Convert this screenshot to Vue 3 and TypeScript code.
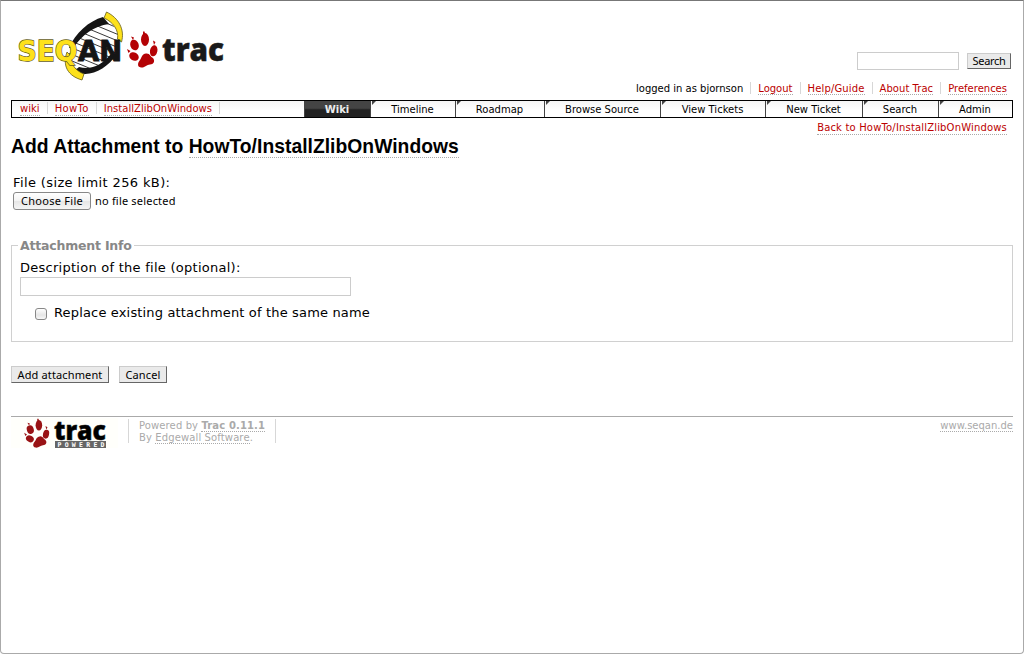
<script setup lang="ts">
interface Tab { label: string; width: number; active?: boolean }
const tabs: Tab[] = [
  { label: 'Wiki', width: 66, active: true },
  { label: 'Timeline', width: 85 },
  { label: 'Roadmap', width: 89 },
  { label: 'Browse Source', width: 116 },
  { label: 'View Tickets', width: 105 },
  { label: 'New Ticket', width: 97 },
  { label: 'Search', width: 76 },
  { label: 'Admin', width: 74 },
]
const crumbs = ['wiki', 'HowTo', 'InstallZlibOnWindows']
const links = ['Logout', 'Help/Guide', 'About Trac', 'Preferences']
const rungs = [0, 1, 2, 3, 4, 5, 6, 7, 8, 9, 10, 11, 12]
</script>

<template>
  <div class="window">
    <header class="banner">
      <svg class="logo" width="220" height="80" viewBox="10 6 220 80">
        <defs>
          <clipPath id="helix"><path d="M105 20C91 24 78 34 72 47C67 55 66 67 78 73C96 72 111 61 116 50C121 39 120 27 105 20Z" /></clipPath>
          <g id="paw">
            <ellipse cx="145" cy="39.500" rx="4" ry="6.500" />
            <ellipse cx="134.500" cy="45" rx="4.200" ry="5.400" transform="rotate(-18 134.500 45)" />
            <ellipse cx="153.700" cy="50.800" rx="3.700" ry="5.600" transform="rotate(12 153.700 50.800)" />
            <ellipse cx="134" cy="56.500" rx="5" ry="4" transform="rotate(30 134 56.500)" />
            <path d="M146 53.500C150 53 150.500 57 153 58C155.500 61 153.500 64.500 150 64.500C146.500 64.500 145 68 141 67.500C136.500 67 138 62 140 60C142 57 142 54 146 53.500Z" />
            <path d="M143 31.500L144.500 31.500L145.500 35L143 34.500ZM131 36.500L134 37.500L133 40ZM153 40.500L155.500 42L154 45ZM127 49L130.500 51L128.500 53Z" />
          </g>
        </defs>
        <path d="M105 20C91 24 78 34 72 47C67 55 66 67 78 73C96 72 111 61 116 50C121 39 120 27 105 20Z" fill="#fff" />
        <g clip-path="url(#helix)" stroke="#222" stroke-width=".9">
          <line v-for="i in rungs" :key="i" x1="60" :y1="i * 6.500 - 9" x2="130" :y2="i * 6.500 + 20" />
        </g>
        <path d="M103 17C89 21 75 33 69 48L74 47C82 35 94 26 109 24Z" fill="#151515" />
        <path d="M74 71C88 79 106 70 117 54L111 54C101 66 91 70 79 67Z" fill="#151515" />
        <path d="M106.500 12C119 18 125 30 121.500 42L117.500 39C119 30 113 22 104 18Z" fill="#fde11b" stroke="#655c19" stroke-width=".8" />
        <path d="M72 57C70 64 76 71 84 74L82 80C68 76 62 66 67 52Z" fill="#fde11b" stroke="#655c19" stroke-width=".8" />
        <text x="17.500" y="61" class="seq" textLength="60" lengthAdjust="spacingAndGlyphs">SEQ</text>
        <text x="78" y="61" class="an" textLength="44" lengthAdjust="spacingAndGlyphs">AN</text>
        <use href="#paw" fill="#b40205" />
        <text x="162" y="61" class="trac" textLength="62" lengthAdjust="spacingAndGlyphs">trac</text>
      </svg>
      <div class="tools">
        <form class="search" @submit.prevent>
          <input type="text" aria-label="Search" /><button class="btn find">Search</button>
        </form>
        <ul class="meta">
          <li>logged in as bjornson</li>
          <li v-for="l in links" :key="l"><a>{{ l }}</a></li>
        </ul>
      </div>
    </header>

    <nav class="mainnav">
      <div class="crumbs"><span v-for="c in crumbs" :key="c" :class="{ project: c === 'HowTo' }"><a>{{ c }}</a></span></div>
      <div v-for="t in tabs" :key="t.label" class="tab" :class="{ active: t.active }" :style="{ width: t.width + 'px' }"><span>{{ t.label }}</span></div>
    </nav>
    <div class="back"><a>Back to HowTo/InstallZlibOnWindows</a></div>

    <main>
      <h1>Add Attachment to <a>HowTo/InstallZlibOnWindows</a></h1>
      <div class="file">
        <label class="flabel">File (size limit 256 kB):</label>
        <div class="pick"><button class="choose">Choose File</button><span>no file selected</span></div>
      </div>
      <section class="info">
        <h2>Attachment Info</h2>
        <label class="desc">Description of the file (optional):</label>
        <input type="text" aria-label="Description" />
        <label class="replace"><i class="check"></i><span>Replace existing attachment of the same name</span></label>
      </section>
      <div class="buttons"><button class="btn add">Add attachment</button><button class="btn cancel">Cancel</button></div>
    </main>

    <footer>
      <svg class="powered" width="107" height="32" viewBox="11 417 107 32">
        <rect x="11" y="418" width="107" height="30" fill="#fffffb" />
        <use href="#paw" fill="#991315" transform="translate(-80 393.600) scale(.82 .8)" />
        <text x="54" y="440" class="ptrac" textLength="52" lengthAdjust="spacingAndGlyphs">trac</text>
        <rect x="55" y="441" width="51" height="7" fill="#666" />
        <text x="57.500" y="447" class="pw" textLength="47">POWERED</text>
      </svg>
      <p class="by">Powered by <a><b>Trac 0.11.1</b></a><br />By <a>Edgewall Software</a>.</p>
      <p class="site"><a>www.seqan.de</a></p>
    </footer>
  </div>
</template>

<style>
html, body { margin: 0; background: #fff; }
</style>
<style scoped>
* { box-sizing: border-box; }
.window { width: 1024px; height: 654px; padding: 0 10px; border: 1px solid #aaa; border-top-color: #777; border-radius: 0 0 4px 4px; overflow: hidden; font: 10px/13px "DejaVu Sans", sans-serif; color: #000; }
.banner { display: flex; justify-content: space-between; height: 99px; }
svg { overflow: visible; flex: none; }
.logo { margin: 5px 0 0 -1px; }
text { font-family: "DejaVu Sans", sans-serif; font-weight: bold; }
.seq { font-size: 29px; fill: #fde11b; stroke: #655c19; stroke-width: 1.400px; paint-order: stroke; }
.an { font-size: 29px; fill: #151515; stroke: #151515; stroke-width: 1px; }
.trac, .ptrac { font-family: "Open Sans", sans-serif; font-weight: 800; fill: #1a1a1a; stroke: #1a1a1a; stroke-width: .5px; }
.trac { font-size: 32px; }
.ptrac { font-size: 27px; fill: #000; }
.pw { font-family: "DejaVu Sans Mono", monospace; font-size: 6.500px; fill: #fff; font-weight: bold; }
a { color: #b00; border-bottom: 1px dotted #aaa; }
.tools { padding-top: 51px; }
.search { display: flex; justify-content: flex-end; gap: 8px; padding-right: 2px; }
input { border: 1px solid #ccc; background: #fff; padding: 0; margin: 0; }
.search input { width: 102px; height: 18px; }
.btn { font: 11px/14px "Noto Sans", sans-serif; color: #000; background: #eaeaea; border: 1px solid #ccc; border-right-color: #666; border-bottom-color: #666; padding: 0; margin: 0; height: 17px; white-space: nowrap; text-align: center; }
.find { width: 44px; height: 16px; margin-top: 1px; font-size: 11px; letter-spacing: -.3px; }
.meta { display: flex; justify-content: flex-end; list-style: none; margin: 12px 0 0; padding: 0; line-height: 13px; white-space: nowrap; }
.meta li { padding: 0 7px; border-right: 1px solid #d7d7d7; height: 12px; }
.meta li:nth-child(3) { letter-spacing: .15px; }
.meta li:nth-child(4) { letter-spacing: .05px; }
.meta li:last-child { border: 0; padding-right: 6px; }
.meta a { display: inline-block; height: 13px; line-height: 13px; }
.mainnav { display: flex; width: 1002px; height: 18px; border: 1px solid #000; background: linear-gradient(#f5f5f5, #fff 60%); }
.crumbs { flex: 1; display: flex; line-height: 14px; padding-left: 1px; }
.crumbs span { padding: 0 7px; height: 12px; margin-top: 1px; border-right: 1px solid #d7d7d7; letter-spacing: .03px; }
.crumbs .project { letter-spacing: .35px; }
.crumbs a { display: inline-block; height: 13px; line-height: 12px; }
.tab { position: relative; border-left: 1px solid #444; padding-right: 1px; text-align: center; line-height: 17px; flex: none; white-space: nowrap; }
.tab::before { content: ""; position: absolute; left: 1px; top: 0; border-top: 4px solid #444; border-right: 4px solid transparent; }
.active { background: linear-gradient(#444 45%, #222 55%); color: #eee; font-weight: bold; }
.active::before { display: none; }
.back { text-align: right; padding-right: 6px; height: 17px; padding-top: 3px; letter-spacing: .17px; }
.back a { display: inline-block; height: 14px; line-height: 13px; }
h1 { font: bold 19.300px/24px "Liberation Sans", sans-serif; letter-spacing: .03px; margin: 0; height: 24px; white-space: nowrap; }
h1 a { color: #000; display: inline-block; height: 23px; }
.file { margin-top: 16px; padding-left: 2px; height: 64px; }
.flabel, .desc, .replace { font-size: 13px; line-height: 16px; white-space: nowrap; }
.flabel { display: block; height: 16px; letter-spacing: .38px; }
.pick { display: flex; align-items: flex-start; font: 11px/20px "Noto Sans", sans-serif; gap: 4px; letter-spacing: .19px; }
.choose { width: 78px; height: 18px; margin: 1px 0 0; padding: 0; border: 1px solid #888; border-radius: 3px; background: linear-gradient(#fff, #f3f3f3 50%, #e6e6e6 51%, #f5f5f5); font: 11px/14px "Noto Sans", sans-serif; letter-spacing: .27px; color: #000; }
.info { width: 1002px; height: 97px; margin-top: 6px; border: 1px solid #d0d0d0; padding: 0 8px; }
.info h2 { font-size: 12.500px; line-height: 16px; letter-spacing: -.2px; color: #888; margin: -8px 0 0 -2px; padding: 0 2px; background: #fff; width: max-content; height: 16px; white-space: nowrap; }
.desc { display: block; margin-top: 6px; height: 17px; letter-spacing: .26px; }
.info input { display: block; width: 331px; height: 19px; }
.replace { display: flex; margin: 9px 0 0 15px; gap: 7px; letter-spacing: .16px; }
.check { width: 12px; height: 12px; margin-top: 3px; border: 1px solid #888; border-radius: 3px; background: linear-gradient(#fff, #e6e6e6 60%, #f8f8f8); }
.buttons { display: flex; gap: 10px; margin-top: 24px; }
.add { width: 98px; letter-spacing: .13px; }
.cancel { width: 48px; letter-spacing: .13px; }
footer { width: 1002px; margin-top: 33px; border-top: 1px solid #aaa; display: flex; color: #aaa; line-height: 12px; }
footer a { color: #aaa; }
footer p { margin: 0; }
.by { margin: 2px 0 0 10px; height: 24px; padding: 1px 10px 0; border-left: 1px solid #d7d7d7; border-right: 1px solid #d7d7d7; white-space: nowrap; letter-spacing: .12px; }
.site { margin: 3px 0 0 auto; }
</style>
